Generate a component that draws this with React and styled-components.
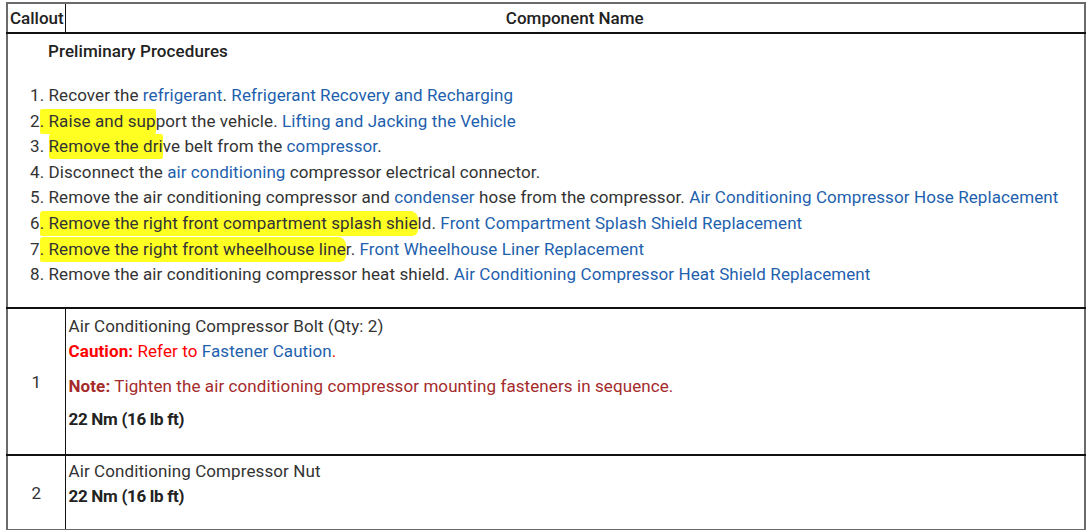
import React from 'react';
import styled, { createGlobalStyle } from 'styled-components';

const Global = createGlobalStyle`
  body {
    margin: 0;
    background: #fff;
    font-family: Roboto, "Liberation Sans", sans-serif;
    color: #333;
  }
`;

const Table = styled.table`
  margin: 2px 0 0 6px;
  width: 1080px;
  table-layout: fixed;
  border-collapse: collapse;
  border: 2px solid #6a6a6a;
  font-size: 17px;
  letter-spacing: 0.09px;
`;

const Col = styled.col`
  width: ${p => p.$w || 'auto'};
`;

const HeadCell = styled.th`
  height: 28px;
  padding: 0 ${p => (p.$narrow ? '2px' : '0')};
  text-align: ${p => (p.$narrow ? 'left' : 'center')};
  font-size: 17px;
  font-weight: 500;
  letter-spacing: 0;
  color: #222;
  border-bottom: 2px solid #111;
  border-right: ${p => (p.$narrow ? '1px solid #111' : 'none')};
`;

const ProcCell = styled.td`
  height: 267px;
  vertical-align: top;
  padding: 6px 0 0 22px;
  border-bottom: 2px solid #111;
`;

const ProcTitle = styled.div`
  font-weight: 500;
  color: #222;
  margin-left: 18px;
  line-height: 22px;
  margin-bottom: 21px;
`;

const Steps = styled.ol`
  margin: 0;
  padding: 0;
  list-style: none;
`;

const Step = styled.li`
  line-height: 25.6px;
  white-space: nowrap;
`;

const Link = styled.span`
  color: #1e5fae;
`;

const Mark = styled.span`
  background: #ffff22;
  padding: 2px 0 3px;
  border-radius: ${p => (p.$wavy ? '3px 8px 6px 2px' : '2px')};
`;

const NumCell = styled.td`
  text-align: center;
  vertical-align: middle;
  padding: 0;
  border-right: 1px solid #111;
  border-bottom: ${p => (p.$last ? 'none' : '2px solid #111')};
  color: #333;
`;

const BodyCell = styled.td`
  height: ${p => p.$h}px;
  vertical-align: top;
  padding: ${p => (p.$last ? 3 : 5)}px 0 0 3px;
  border-bottom: ${p => (p.$last ? 'none' : '2px solid #111')};
`;

const Line = styled.div`
  line-height: 25px;
  margin-bottom: ${p => p.$mb || 0}px;
`;

const Caution = styled.span`
  color: #ff0000;
`;

const Note = styled.span`
  color: #a52a2a;
`;

const Torque = styled.div`
  font-weight: 700;
  color: #222;
  line-height: 25px;
  letter-spacing: -0.3px;
`;

export default function App() {
  return (
    <>
      <Global />
      <Table>
        <colgroup>
          <Col $w="58px" />
          <Col />
        </colgroup>
        <thead>
          <tr>
            <HeadCell $narrow>Callout</HeadCell>
            <HeadCell>Component Name</HeadCell>
          </tr>
        </thead>
        <tbody>
          <tr>
            <ProcCell colSpan={2}>
              <ProcTitle>Preliminary Procedures</ProcTitle>
              <Steps>
                <Step>1. Recover the <Link>refrigerant</Link>. <Link>Refrigerant Recovery and Recharging</Link></Step>
                <Step>2<Mark>. Raise and sup</Mark>port the vehicle. <Link>Lifting and Jacking the Vehicle</Link></Step>
                <Step>3. <Mark>Remove the dri</Mark>ve belt from the <Link>compressor</Link>.</Step>
                <Step>4. Disconnect the <Link>air conditioning</Link> compressor electrical connector.</Step>
                <Step>5. Remove the air conditioning compressor and <Link>condenser</Link> hose from the compressor. <Link>Air Conditioning Compressor Hose Replacement</Link></Step>
                <Step>6<Mark $wavy>. Remove the right front compartment splash shie</Mark>ld. <Link>Front Compartment Splash Shield Replacement</Link></Step>
                <Step>7<Mark $wavy>. Remove the right front wheelhouse line</Mark>r. <Link>Front Wheelhouse Liner Replacement</Link></Step>
                <Step>8. Remove the air conditioning compressor heat shield. <Link>Air Conditioning Compressor Heat Shield Replacement</Link></Step>
              </Steps>
            </ProcCell>
          </tr>
          <tr>
            <NumCell>1</NumCell>
            <BodyCell $h={140}>
              <Line>Air Conditioning Compressor Bolt (Qty: 2)</Line>
              <Line $mb={10}>
                <Caution><b>Caution:</b> Refer to </Caution><Link>Fastener Caution</Link><Caution>.</Caution>
              </Line>
              <Line $mb={8}>
                <Note><b>Note:</b> Tighten the air conditioning compressor mounting fasteners in sequence.</Note>
              </Line>
              <Torque>22 Nm (16 lb ft)</Torque>
            </BodyCell>
          </tr>
          <tr>
            <NumCell $last>2</NumCell>
            <BodyCell $h={70} $last>
              <Line>Air Conditioning Compressor Nut</Line>
              <Torque>22 Nm (16 lb ft)</Torque>
            </BodyCell>
          </tr>
        </tbody>
      </Table>
    </>
  );
}
